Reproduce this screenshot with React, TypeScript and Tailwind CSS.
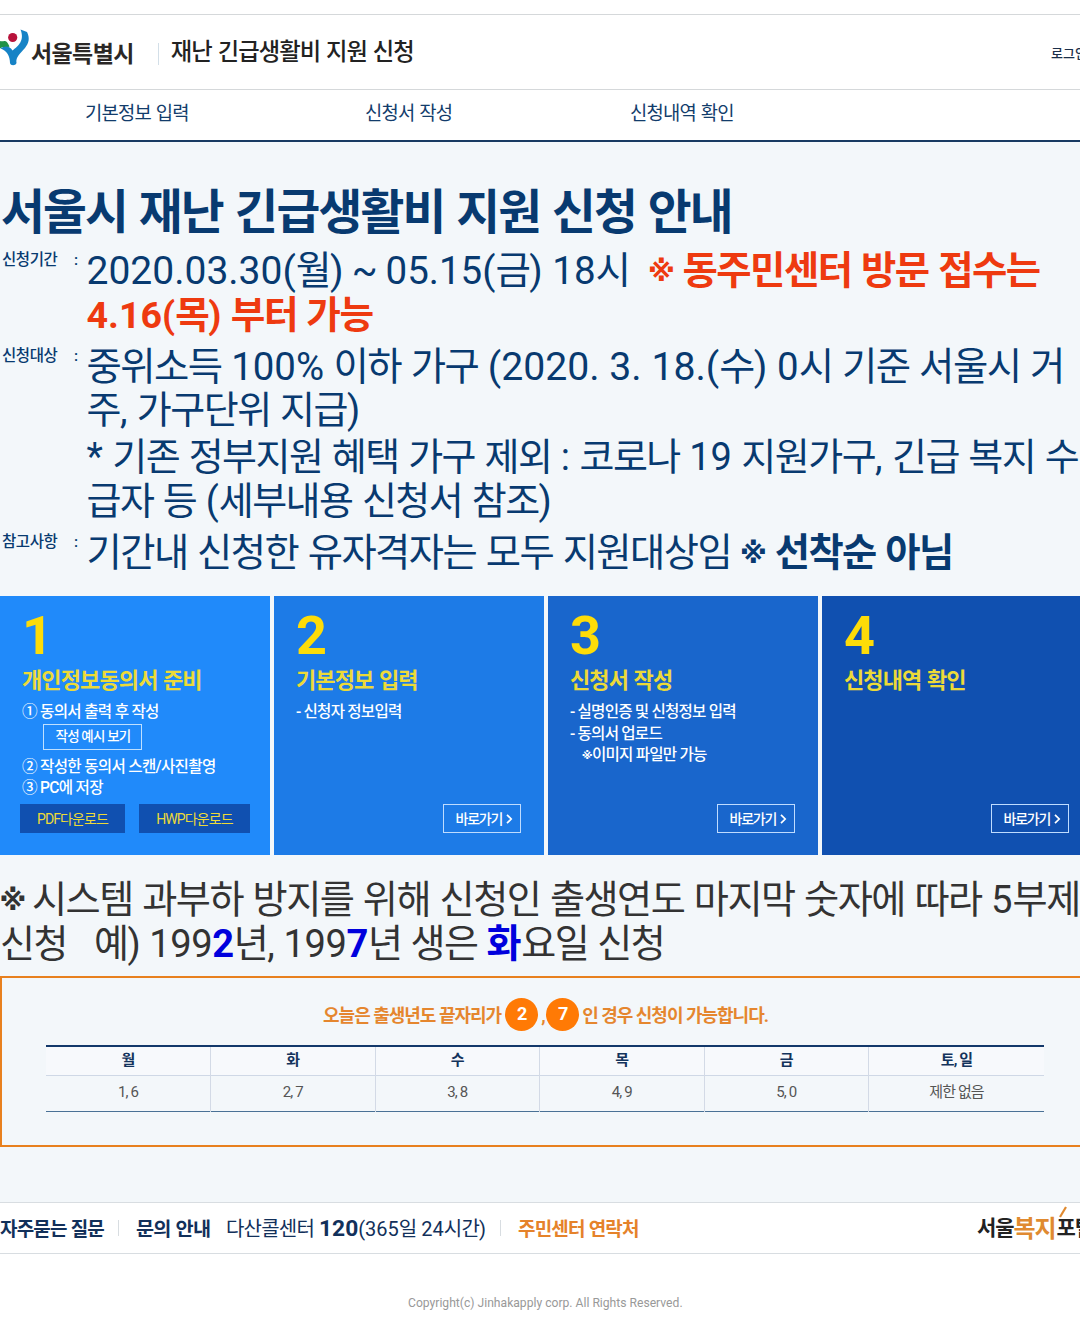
import { Fragment } from "react";
import clsx from "clsx";

const steps = [
	{
		no: "1",
		title: "개인정보동의서 준비",
		bg: "bg-[#208afa]",
		items: [],
	},
	{
		no: "2",
		title: "기본정보 입력",
		bg: "bg-[#1d7be7]",
		items: ["- 신청자 정보입력"],
	},
	{
		no: "3",
		title: "신청서 작성",
		bg: "bg-[#1966cc]",
		items: ["- 실명인증 및 신청정보 입력", "- 동의서 업로드"],
		note: "이미지 파일만 가능",
	},
	{
		no: "4",
		title: "신청내역 확인",
		bg: "bg-[#1050b0]",
		items: [],
	},
];

const days = [
	{ day: "월", digits: "1, 6" },
	{ day: "화", digits: "2, 7" },
	{ day: "수", digits: "3, 8" },
	{ day: "목", digits: "4, 9" },
	{ day: "금", digits: "5, 0" },
	{ day: "토, 일", digits: "제한 없음" },
];

// Hangul is set a little tighter than the latin text and digits around it
const Ko = ({ children }: { children: string }) => (
	<>
		{children.split(/([가-힣]+)/).map((part, i) =>
			/[가-힣]/.test(part) ? (
				<span key={i} className="tracking-[-0.04em]">
					{part}
				</span>
			) : (
				<Fragment key={i}>{part}</Fragment>
			)
		)}
	</>
);

const Mark = () => (
	<span className="inline-block w-[0.64em] font-['DejaVu_Sans'] font-bold leading-none">
		<span className="-ml-[0.02em] align-[0.1em] text-[0.72em]">※</span>
	</span>
);

const Header = () => {
	return (
		<header className="bg-white pt-[14px]">
			<div className="flex h-[76px] items-center border-y border-[#d5d8da]">
				<svg width="30" height="37" viewBox="0 0 30 37" className="-mt-[9px]">
					<path d="M0 12 C4 13 6 9 9.500 17.500 L6 19 C4 17 2 18 0 19.500 Z" fill="#1f9247" />
					<circle cx="12.7" cy="8.500" r="4.600" fill="#b8123b" />
					<path
						d="M20.500 0.500 L27 3 C30 9 29 14 25 19 C20 25 15.500 28 16.500 34 C15.500 37 10.500 37 10 34 C10 27 7 22 0.500 19.500 C5 16 10 17 12.500 21.500 C18 17 25 12 20.500 0.500 Z"
						fill="#1683c6"
					/>
				</svg>
				<span className="mt-[5px] pl-px text-[23px] font-bold leading-[30px] tracking-[-0.6px] text-[#2b2726]">
					서울특별시
				</span>
				<span className="ml-[24px] mt-[3px] h-[22px] w-px bg-[#d3dfe8]"></span>
				<h1 className="ml-[12px] text-[23.300px] font-medium leading-[30px] text-[#222]">
					<Ko>재난 긴급생활비 지원 신청</Ko>
				</h1>
				<a className="ml-auto mt-[3px] w-[29px] text-[13px] font-medium text-[#1b2f4a]">로그인</a>
			</div>
			<nav className="flex h-[52px] border-b-2 border-[#183a62] text-[18.800px] leading-[49px] text-[#123c6b]">
				<a className="w-[280px] pl-[85px]">
					<Ko>기본정보 입력</Ko>
				</a>
				<a className="w-[265px] pl-[85px]">
					<Ko>신청서 작성</Ko>
				</a>
				<a className="pl-[85px]">
					<Ko>신청내역 확인</Ko>
				</a>
			</nav>
		</header>
	);
};

const InfoLabel = ({ children }: { children: string }) => (
	<dt className="flex w-[86.500px] shrink-0 pl-[2px] text-[15.500px] font-medium leading-[22px] tracking-[-0.4px]">
		<span className="w-[72px]">{children}</span>:
	</dt>
);

const Info = () => {
	return (
		<dl className="text-[38px] leading-[44px] text-[#083a70]">
			<div className="flex">
				<InfoLabel>신청기간</InfoLabel>
				<dd>
					<p className="h-[44px]">
						<span className="text-[39px]">
							<Ko>2020.03.30(월)</Ko>
						</span>
						<span className="mx-[8px]">~</span>
						<span className="text-[38.500px]">
							<Ko>05.15(금) 18시</Ko>
						</span>
						<b className="ml-[19px] text-[38.400px] text-[#ee3a10]">
							<Mark />
							<Ko> 동주민센터 방문 접수는</Ko>
						</b>
					</p>
					<p className="text-[37.600px] font-bold text-[#ee3a10]">
						<Ko>4.16(목) 부터 가능</Ko>
					</p>
				</dd>
			</div>
			<div className="mt-[8px] flex">
				<InfoLabel>신청대상</InfoLabel>
				<dd>
					<p className="h-[43px] text-[38.400px]">
						<Ko>중위소득 100% 이하 가구 </Ko>
						<span className="text-[39.200px]">
							<Ko>(2020. 3. 18.(수) </Ko>
						</span>
						<Ko>0시 기준 서울시 거</Ko>
					</p>
					<p>
						<Ko>주, 가구단위 지급)</Ko>
					</p>
					<p className="mt-[3px]">
						<Ko>* 기존 정부지원 혜택 가구 제외 : 코로나 19 지원가구, 긴급 복지 수</Ko>
					</p>
					<p>
						<Ko>급자 등 (세부내용 신청서 참조)</Ko>
					</p>
				</dd>
			</div>
			<div className="mt-[8px] flex">
				<InfoLabel>참고사항</InfoLabel>
				<dd className="text-[38.300px]">
					<Ko>기간내 신청한 유자격자는 모두 지원대상임 </Ko>
					<b>
						<Mark />
						<Ko> 선착순 아님</Ko>
					</b>
				</dd>
			</div>
		</dl>
	);
};

const Steps = () => {
	return (
		<div className="flex w-[1096px] gap-[4px]">
			{steps.map((step) => (
				<section
					key={step.no}
					className={clsx("flex h-[259px] w-[270px] shrink-0 flex-col text-white", step.bg)}
				>
					<div className="pl-[22px] pt-[13px] text-[54px] font-bold leading-[54px] text-[#fddc08]">
						{step.no}
					</div>
					<h3 className="mt-[3px] pl-[22px] text-[22px] font-bold leading-[30px] text-[#ecda38]">
						<Ko>{step.title}</Ko>
					</h3>
					<div className="pl-[22px] pt-[6px] text-[15.600px] font-medium leading-[21.500px] tracking-[-0.8px]">
						{step.no === "1" && (
							<div className="tracking-[-0.7px]">
								<p>① 동의서 출력 후 작성</p>
								<a className="mb-[2px] ml-[21px] flex h-[26px] w-[99px] items-center justify-center border border-[#bfe0ff] pl-px text-[13.500px] tracking-[-0.8px]">
									작성 예시 보기
								</a>
								<p className="mt-[7px]">② 작성한 동의서 스캔/사진촬영</p>
								<p>③ PC에 저장</p>
							</div>
						)}
						{step.items.map((item) => (
							<p key={item}>{item}</p>
						))}
						{step.note && (
							<p className="pl-[12px]">
								<Mark />
								{step.note}
							</p>
						)}
					</div>
					{step.no === "1" ? (
						<div className="mb-[22px] ml-[20px] mt-auto flex gap-[14px] text-[14px] leading-[30px] tracking-[-0.9px] text-[#ecda38]">
							<a className="h-[29px] w-[105px] bg-[#1050b0] text-center">PDF다운로드</a>
							<a className="h-[29px] w-[111px] bg-[#1050b0] text-center">HWP다운로드</a>
						</div>
					) : (
						<a className="mb-[22px] ml-auto mr-[23px] mt-auto flex h-[29px] w-[78px] items-center border border-[#bfdcff] pl-[11.500px] pt-px text-[14px] font-medium tracking-[-1.200px]">
							바로가기
							<svg width="7" height="10" viewBox="0 0 7 10" className="ml-[4px]">
								<path d="M1 0.800 L5.200 5 L1 9.200" fill="none" stroke="white" strokeWidth="1.700" />
							</svg>
						</a>
					)}
				</section>
			))}
		</div>
	);
};

const Schedule = () => {
	return (
		<div className="h-[171px] w-[1092px] border-2 border-[#e8801e] pl-[44px]">
			<p className="flex h-[67px] w-[999px] items-center justify-center pt-[7px] text-[18px] font-bold tracking-[-1px] text-[#e5862e]">
				오늘은 출생년도 끝자리가
				<span className="-mt-px ml-[4px] h-[33px] w-[33px] rounded-full bg-[#ff7a05] text-center leading-[31px] text-white">
					2
				</span>
				<span className="ml-[3px] w-[5px]">,</span>
				<span className="-mt-px h-[33px] w-[33px] rounded-full bg-[#ff7a05] text-center leading-[31px] text-white">
					7
				</span>
				<span className="ml-[3px]">인 경우 신청이 가능합니다.</span>
			</p>
			<table className="w-[998px] table-fixed border-collapse text-center text-[15px] tracking-[-0.9px]">
				<thead>
					<tr className="h-[29px] border-b border-t-2 border-b-[#cfd8e6] border-t-[#13386a] bg-[#f7f9fc] text-[#13335c]">
						{days.map(({ day }, i) => (
							<th
								key={day}
								className={clsx(
									"p-0 pb-[2px] font-bold",
									i < 5 ? "w-[164.500px] border-r border-r-[#d3dae6]" : "w-auto"
								)}
							>
								{day}
							</th>
						))}
					</tr>
				</thead>
				<tbody>
					<tr className="h-[36px] border-b border-b-[#4a7196] text-[#555]">
						{days.map(({ day, digits }, i) => (
							<td key={day} className={clsx("p-0 pb-[2px]", i < 5 && "border-r border-r-[#d3dae6]")}>
								{digits}
							</td>
						))}
					</tr>
				</tbody>
			</table>
		</div>
	);
};

const Footer = () => {
	return (
		<footer className="bg-white text-[#12305a]">
			<div className="flex h-[52px] items-center border-y border-[#d8dde1] text-[20px]">
				<a className="w-[118px] pt-[5px] text-[19px] font-bold tracking-[-0.8px]">자주묻는 질문</a>
				<span className="h-[16px] w-px bg-[#d8dde1]"></span>
				<span className="ml-[17px] w-[90px] pt-[4px] text-[19.700px] font-bold">
					<Ko>문의 안내</Ko>
				</span>
				<span className="w-[274px] pt-[2px]">
					<Ko>다산콜센터 </Ko>
					<b className="text-[22.800px]">120</b>
					<Ko>(365일 24시간)</Ko>
				</span>
				<span className="h-[16px] w-px bg-[#d8dde1]"></span>
				<a className="ml-[17px] pt-[5px] text-[19px] font-bold tracking-[-0.8px] text-[#e5822a]">
					주민센터 연락처
				</a>
				{/* welfare portal logo */}
				<a className="relative ml-auto flex w-[103px] items-center pt-[2px] text-[21px] font-bold tracking-[-1.100px] text-[#222]">
					서울<span className="mr-px text-[24px] text-[#e08a30]">복지</span>포털
					<svg width="8" height="12" viewBox="0 0 8 12" className="absolute left-[82px] top-[-3px]">
						<path d="M1 11 L7 1" stroke="#e08a30" strokeWidth="2.200" />
					</svg>
				</a>
			</div>
			<p className="pt-[39px] pl-[408px] text-[12.130px] leading-[20px] text-[#999]">
				Copyright(c) Jinhakapply corp. All Rights Reserved.
			</p>
		</footer>
	);
};

const App = () => {
	return (
		<div className="h-[1332px] w-[1080px] overflow-hidden whitespace-nowrap bg-white font-[Roboto,'Noto_Sans_CJK_KR',sans-serif]">
			<Header />
			<main className="h-[1060px] overflow-hidden bg-[#f3f7fa] pt-[38px]">
				<h2 className="pl-px text-[47.700px] font-bold leading-[66px] text-[#083a70]">
					<Ko>서울시 재난 긴급생활비 지원 신청 안내</Ko>
				</h2>
				<div className="h-[350px] pt-[3px]">
					<Info />
				</div>
				<Steps />
				<div className="h-[121px] pt-[23px] text-[38px] leading-[44px] text-[#333]">
					<p className="h-[44px] text-[38.200px]">
						<span className="-mr-[2px]">
							<Mark />
						</span>
						<Ko> 시스템 과부하 방지를 위해 신청인 출생연도 마지막 숫자에 따라 5부제</Ko>
					</p>
					<p>
						<Ko>신청</Ko>
						<span className="ml-[27px] text-[38.100px] tracking-[-0.400px]">
							<Ko>예) 199</Ko>
							<b className="text-[#0000dd]">2</b>
							<Ko>년, 199</Ko>
							<b className="text-[#0000dd]">7</b>
							<Ko>년 생은 </Ko>
							<b className="text-[#0000dd]">화</b>
							<Ko>요일 신청</Ko>
						</span>
					</p>
				</div>
				<Schedule />
			</main>
			<Footer />
		</div>
	);
};

export default App;
